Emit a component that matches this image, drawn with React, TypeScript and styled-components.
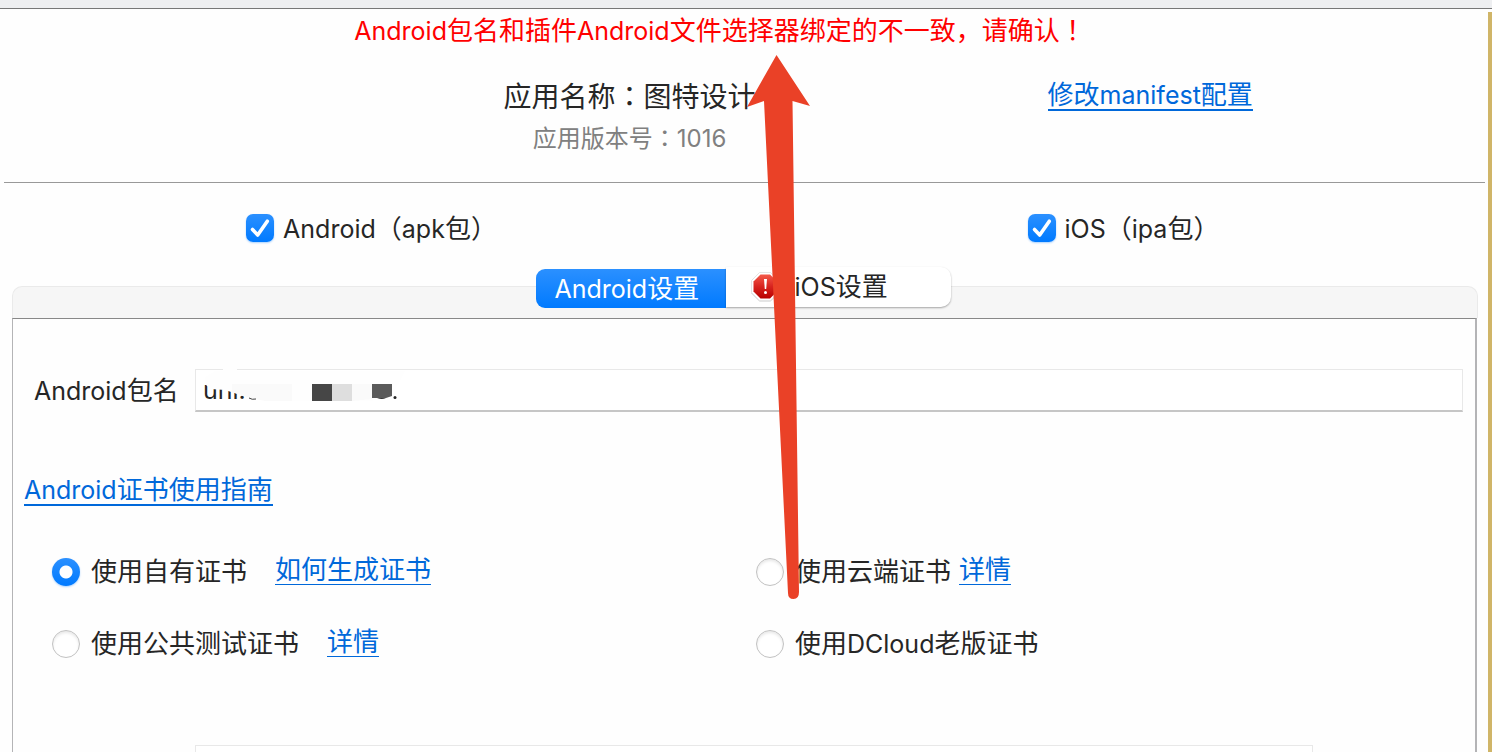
import React from "react";
import styled, { createGlobalStyle } from "styled-components";

const GlobalStyle = createGlobalStyle`
  *, *::before, *::after { box-sizing: border-box; }
  body {
    margin: 0;
    background: #fefefe;
    color: #262626;
    font-family: Inter, "Noto Sans CJK SC", sans-serif;
    font-size: 26px;
    line-height: 32px;
  }
`;

const Window = styled.div`
  position: relative;
  display: flex;
  flex-direction: column;
  height: 100vh;
  overflow: hidden;
`;

const TopEdge = styled.div`
  flex: none;
  height: 9px;
  background: #eeeff1;
  border-bottom: 1px solid #777;
`;

const Body = styled.div`
  display: flex;
  flex: 1;
  min-height: 0;
`;

const Dialog = styled.main`
  display: flex;
  flex-direction: column;
  flex: 1;
  min-width: 0;
  padding: 4px 2px 0 4px;
`;

const SideEdge = styled.div`
  width: 4px;
  margin-top: 3px;
  background: #d0b568;
`;

const Latin = styled.span`
  font-size: 25px;
`;

const Punct = styled.span`
  font-family: "Noto Sans CJK TC", sans-serif;
`;

const Message = styled.p`
  margin: 0;
  padding-right: 50px;
  text-align: center;
  color: #ff0000;
  white-space: nowrap;
`;

const Header = styled.header`
  display: grid;
  grid-template-columns: 385fr 482fr 560fr 55fr;
  margin-top: 32px;
  height: 104px;
  margin-right: 1px;
  border-bottom: 1px solid #999;
  white-space: nowrap;
`;

const AppInfo = styled.div`
  grid-column: 2;
  text-align: center;
`;

const AppName = styled.h1`
  margin: 0;
  font-size: 28px;
  font-weight: 400;
  line-height: 32px;
`;

const AppVersion = styled.p`
  margin: 8px 0 0;
  font-size: 24px;
  color: #808080;
`;

const HeaderAction = styled.div`
  grid-column: 3;
  text-align: center;
`;

const Link = styled.a<{ $weight?: number }>`
  display: inline-block;
  line-height: 28px;
  border-bottom: ${(p) => p.$weight ?? 1}px solid #0068da;
  color: #0068da;
  text-decoration: none;
  white-space: nowrap;
`;

const Platforms = styled.div`
  display: grid;
  grid-template-columns: 735fr 725fr;
  column-gap: 22px;
  padding: 28px 0 41px;
`;

const Choice = styled.label`
  display: flex;
  align-items: center;
  white-space: nowrap;
`;

const PlatformChoice = styled(Choice)`
  justify-content: center;
  gap: 9px;
`;

const CheckFrame = styled.span`
  display: grid;
  width: 28px;
  height: 28px;

  > * {
    grid-area: 1 / 1;
  }
`;

const CheckInput = styled.input`
  appearance: none;
  width: 28px;
  height: 28px;
  margin: 0;
  border: 1px solid #c4c4c4;
  border-radius: 7px;
  background: #fff;

  &:checked {
    border: 0;
    background: linear-gradient(#2b90ff, #007aff);
    box-shadow: 0 1px 2px #007aff55;
  }
`;

const CheckMark = styled.svg`
  width: 28px;
  height: 28px;
  pointer-events: none;
`;

const Tabs = styled.section`
  display: flex;
  flex-direction: column;
  flex: 1;
  min-height: 0;
  padding: 0 8px;
`;

const TabStrip = styled.div`
  display: flex;
  justify-content: center;
  align-items: flex-start;
  flex: none;
  height: 32px;
  padding-right: 4px;
  border: 1px solid #eaeaea;
  border-bottom: 0;
  border-radius: 10px 10px 0 0;
  background: #f6f6f6;
`;

const TabList = styled.div`
  display: flex;
  align-items: flex-start;
  margin-top: -20px;
`;

const Tab = styled.button<{ $active?: boolean }>`
  display: flex;
  align-items: center;
  gap: 16px;
  height: ${(p) => (p.$active ? 39 : 40)}px;
  border: 0;
  font: inherit;
  white-space: nowrap;
  color: ${(p) => (p.$active ? "#fff" : "#262626")};
  background: ${(p) =>
    p.$active ? "linear-gradient(#2b90ff, #007aff)" : "#fff"};
  border-radius: ${(p) => (p.$active ? "9px 0 0 9px" : "0 10px 10px 0")};
  box-shadow: ${(p) => (p.$active ? "none" : "0 1px 2px #00000055")};
  width: ${(p) => (p.$active ? 190 : 225)}px;
  margin-top: ${(p) => (p.$active ? 2 : 0)}px;
  padding: 0 0 0 ${(p) => (p.$active ? 19 : 25)}px;
`;

const StopIcon = styled.svg`
  flex: none;
  width: 28px;
  height: 30px;
`;

const Panel = styled.div`
  flex: 1;
  min-height: 0;
  margin-right: 1px;
  padding-top: 50px;
  border: solid #b4b4b6;
  border-width: 1px 2px 0 1px;
  border-top-color: #888;
  overflow: hidden;
`;

const FieldRow = styled.div`
  display: flex;
  align-items: center;
  padding: 0 12px 0 21px;
`;

const FieldLabel = styled.label`
  width: 161px;
  flex: none;
  white-space: nowrap;
`;

const FieldBox = styled.div`
  position: relative;
  flex: 1;
  min-width: 0;
`;

const TextInput = styled.input`
  display: block;
  width: 100%;
  height: 43px;
  padding: 0 7px;
  border: 1px solid #e8e8e8;
  border-bottom: 2px solid #c6c6c6;
  border-radius: 0;
  outline: 0;
  background: #fff;
  color: #262626;
  font: inherit;
  font-size: 25px;
`;

const Mosaic = styled.svg`
  position: absolute;
  left: 0;
  top: 0;
  width: 220px;
  height: 40px;
  pointer-events: none;
`;

const Guide = styled.div`
  display: flex;
  margin: 64px 0 50px 11px;
`;

const Certificates = styled.div`
  display: grid;
  grid-template-columns: 704fr 719fr;
  row-gap: 40px;
  padding-left: 39px;
`;

const CertificateOption = styled.div<{ $gap?: number }>`
  display: flex;
  align-items: flex-start;
  gap: ${(p) => p.$gap ?? 28}px;
`;

const CertificateChoice = styled(Choice)`
  gap: 11px;
`;

const RadioInput = styled.input`
  appearance: none;
  width: 28px;
  height: 28px;
  margin: 0;
  border: 1px solid #c2c2c2;
  border-radius: 50%;
  background: #fff;
  box-shadow: inset 0 2px 3px #00000018;

  &:checked {
    border: 0;
    background: radial-gradient(circle, #fff 6px, transparent 7px),
      linear-gradient(#2b90ff, #007aff);
    box-shadow: 0 1px 2px #007aff55;
  }
`;

const NextField = styled.div`
  margin: 85px 162px 0 182px;
`;

const Arrow = styled.svg`
  position: absolute;
  top: 54px;
  left: 50%;
  width: 66px;
  height: 548px;
  pointer-events: none;
`;

function CheckBox() {
  return (
    <CheckFrame>
      <CheckInput type="checkbox" defaultChecked />
      <CheckMark viewBox="0 0 28 28" fill="none" aria-hidden="true">
        <path
          d="M6.5 15.5 11.7 21 21.3 7.2"
          stroke="#fff"
          strokeWidth="3.6"
          strokeLinecap="round"
          strokeLinejoin="round"
        />
      </CheckMark>
    </CheckFrame>
  );
}

interface CertificateProps {
  label: React.ReactNode;
  link?: string;
  gap?: number;
  checked?: boolean;
}

function Certificate({ label, link, gap, checked }: CertificateProps) {
  return (
    <CertificateOption $gap={gap}>
      <CertificateChoice>
        <RadioInput type="radio" name="certificate" defaultChecked={checked} />
        <span>{label}</span>
      </CertificateChoice>
      {link && <Link href="#">{link}</Link>}
    </CertificateOption>
  );
}

export default function App() {
  return (
    <>
      <GlobalStyle />
      <Window>
        <TopEdge />
        <Body>
          <Dialog>
            <Message role="alert">
              <Latin>Android</Latin>包名和插件<Latin>Android</Latin>
              文件选择器绑定的不一致，请确认<Punct>！</Punct>
            </Message>

            <Header>
              <AppInfo>
                <AppName>
                  应用名称<Punct>：</Punct>图特设计
                </AppName>
                <AppVersion>
                  应用版本号<Punct>：</Punct>1016
                </AppVersion>
              </AppInfo>
              <HeaderAction>
                <Link href="#" $weight={2}>
                  修改<Latin>manifest</Latin>配置
                </Link>
              </HeaderAction>
            </Header>

            <Platforms>
              <PlatformChoice>
                <CheckBox />
                <span>
                  <Latin>Android</Latin>
                  <Punct>（</Punct>
                  <Latin>apk</Latin>包<Punct>）</Punct>
                </span>
              </PlatformChoice>
              <PlatformChoice>
                <CheckBox />
                <span>
                  <Latin>iOS</Latin>
                  <Punct>（</Punct>
                  <Latin>ipa</Latin>包<Punct>）</Punct>
                </span>
              </PlatformChoice>
            </Platforms>

            <Tabs>
              <TabStrip>
                <TabList role="tablist">
                  <Tab type="button" role="tab" aria-selected="true" $active>
                    <span>
                      <Latin>Android</Latin>设置
                    </span>
                  </Tab>
                  <Tab type="button" role="tab" aria-selected="false">
                    <StopIcon viewBox="0 0 28 30" aria-hidden="true">
                      <defs>
                        <linearGradient id="stop" x1="0" y1="0" x2="0" y2="1">
                          <stop offset="0" stopColor="#f4594a" />
                          <stop offset="0.5" stopColor="#d8241f" />
                          <stop offset="1" stopColor="#b80000" />
                        </linearGradient>
                      </defs>
                      <path
                        d="M8.500 1.500h11l8 8v12l-8 8h-11l-8-8v-12z"
                        fill="#999"
                        opacity="0.5"
                      />
                      <path
                        d="M8.500 .5h11l8 8v12l-8 8h-11l-8-8v-12z"
                        fill="#fff"
                        stroke="#e4e4e4"
                      />
                      <path d="M9.500 2.500h9.500l7 7v10l-7 7H9.500l-7-7v-10z" fill="url(#stop)" />
                      <path d="M13 7h3l-.8 10h-1.400z" fill="#fff" />
                      <circle cx="14.500" cy="20.500" r="1.500" fill="#fff" />
                    </StopIcon>
                    <span>
                      <Latin>iOS</Latin>设置
                    </span>
                  </Tab>
                </TabList>
              </TabStrip>

              <Panel role="tabpanel">
                <FieldRow>
                  <FieldLabel htmlFor="package">
                    <Latin>Android</Latin>包名
                  </FieldLabel>
                  <FieldBox>
                    <TextInput id="package" type="text" defaultValue="uni." />
                    <Mosaic viewBox="0 0 220 40" aria-hidden="true">
                      <path d="M28 0h14v2H28z" fill="#fefefe" />
                      <path
                        d="M10 8 20 2h190l-6 12-8 13-20 5H70L52 28 30 21 16 20 11 16z"
                        fill="#fefefe"
                      />
                      <path d="M37 15h60v17H70L52 28 37 23z" fill="#fafafa" />
                      <path d="M54 29q3 2 7 1" fill="none" stroke="#444" />
                      <path d="M117 15h20v17h-20z" fill="#464646" />
                      <path d="M137 15h20v17h-20z" fill="#dedede" />
                      <path d="M157 15h20v15l-20 2z" fill="#fafafa" />
                      <path d="M177 15h20v12l-6 2h-14z" fill="#5a5a5a" />
                      <path d="M182 29q5 2 9 0z" fill="#333" />
                      <circle cx="200" cy="28.500" r="1.500" fill="#262626" />
                    </Mosaic>
                  </FieldBox>
                </FieldRow>

                <Guide>
                  <Link href="#" $weight={2}>
                    <Latin>Android</Latin>证书使用指南
                  </Link>
                </Guide>

                <Certificates role="radiogroup" aria-label="Android证书">
                  <Certificate label="使用自有证书" link="如何生成证书" checked />
                  <Certificate label="使用云端证书" link="详情" gap={8} />
                  <Certificate label="使用公共测试证书" link="详情" />
                  <Certificate
                    label={
                      <>
                        使用<Latin>DCloud</Latin>老版证书
                      </>
                    }
                  />
                </Certificates>

                <NextField>
                  <TextInput type="text" aria-label="证书" />
                </NextField>
              </Panel>
            </Tabs>
          </Dialog>
          <SideEdge />
        </Body>

        <Arrow viewBox="0 0 66 548" aria-hidden="true">
          <path
            d="M30.500 1 64 52 46.500 47 53 538q0 7-5.500 7t-5.500-6L18 47 1 53z"
            fill="#ea4127"
          />
        </Arrow>
      </Window>
    </>
  );
}
